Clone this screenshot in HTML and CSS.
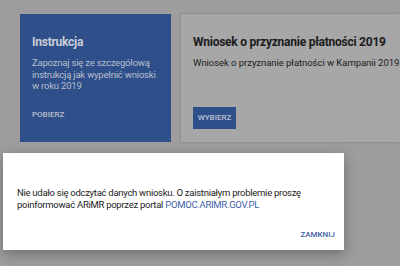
FILE: index.html
```html
<!DOCTYPE html>
<html>
<head>
<link rel="stylesheet" href="styles.css">
</head>
<body>
<div class="cards">
  <div class="card card-blue">
    <h2 class="card-title">Instrukcja</h2>
    <p class="card-text">Zapoznaj się ze szczegółową instrukcją jak wypełnić wnioski w roku 2019</p>
    <a class="card-link" href="#">POBIERZ</a>
  </div>
  <div class="card card-white">
    <h2 class="card-title">Wniosek o przyznanie płatności 2019</h2>
    <p class="card-text">Wniosek o przyznanie płatności w Kampanii 2019.</p>
    <a class="btn" href="#">WYBIERZ</a>
  </div>
</div>

<div class="dialog">
  <p class="dialog-text">Nie udało się odczytać danych wniosku. O zaistniałym problemie proszę poinformować ARiMR poprzez portal <a href="#">POMOC.ARIMR.GOV.PL</a></p>
  <div class="dialog-actions">
    <a class="dialog-btn" href="#">ZAMKNIJ</a>
  </div>
</div>
</body>
</html>
```

FILE: styles.css
```css
* {box-sizing: border-box;}

body {
  margin: 0;
  font-family: Roboto, "Liberation Sans", sans-serif;
  background-color: #9d9d9d;
  width: 400px;
  height: 266px;
  overflow: hidden;
  position: relative;
}

.cards {
  display: flex;
  gap: 10px;
  padding: 14px 0 0 20px;
}

.card {
  height: 128px;
  padding: 21px 12px 0 12px;
  display: flex;
  flex-direction: column;
  flex-shrink: 0;
}

.card-blue {
  width: 151px;
  background-color: #2e4f8a;
  color: #c9cdd6;
}

.card-white {
  width: 219px;
  padding-right: 0;
  background-color: #a7a7a7;
  color: #1c1c1c;
  box-shadow: 0 0 2px rgba(0,0,0,0.25);
}

.card-title {
  margin: 0;
  font-size: 12px;
  font-weight: 700;
  line-height: 14px;
  letter-spacing: -0.25px;
  white-space: nowrap;
}

.card-text {
  margin: 8px 0 0 0;
  font-size: 9.5px;
  line-height: 11.5px;
  letter-spacing: -0.2px;
}

.card-blue .card-text {
  color: #b8bfcd;
}

.card-white .card-text {
  letter-spacing: -0.05px;
  white-space: nowrap;
}

.card-link {
  margin-top: auto;
  margin-bottom: 22px;
  font-size: 8px;
  line-height: 10px;
  font-weight: 500;
  color: #b8bfcd;
  text-decoration: none;
}

.btn {
  margin-top: auto;
  margin-bottom: 13px;
  align-self: flex-start;
  width: 43px;
  height: 22px;
  line-height: 22px;
  text-align: center;
  background-color: #2e4f8a;
  color: #b8c1d3;
  font-size: 8px;
  font-weight: 500;
  text-decoration: none;
}

.dialog {
  position: absolute;
  left: 3px;
  top: 153px;
  width: 341px;
  height: 97px;
  background-color: #fff;
  box-shadow: 0 4px 12px rgba(0,0,0,0.3);
  padding: 34px 9px 0 14px;
}

.dialog-text {
  margin: 0;
  font-size: 9.5px;
  line-height: 12px;
  letter-spacing: -0.28px;
  color: #222;
}

.dialog-text a {
  color: #3f5fa6;
  text-decoration: none;
}

.dialog-actions {
  display: flex;
  justify-content: flex-end;
  margin-top: 19px;
}

.dialog-btn {
  font-size: 8px;
  line-height: 10px;
  font-weight: 500;
  color: #3f5fa6;
  text-decoration: none;
}
```
